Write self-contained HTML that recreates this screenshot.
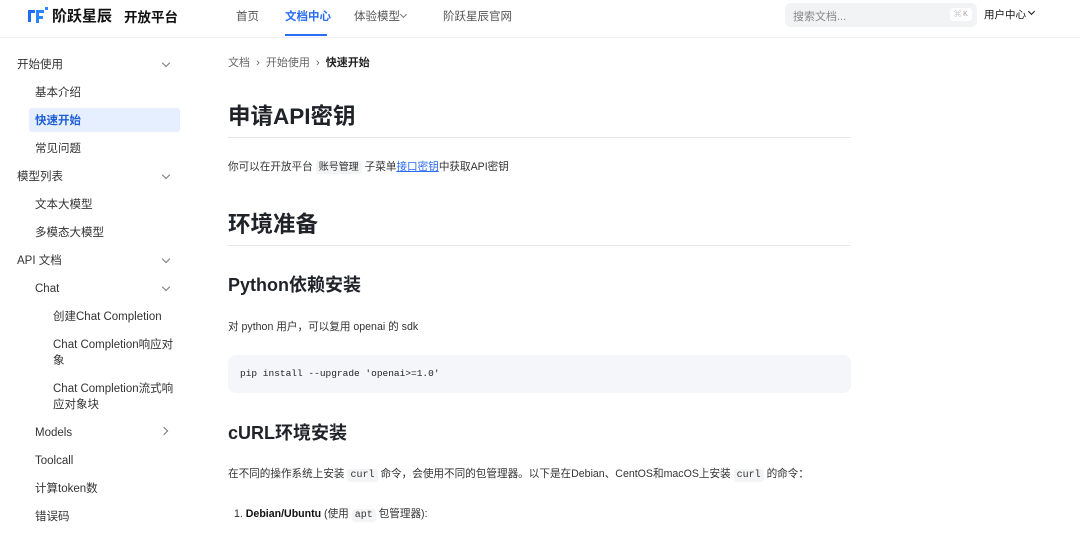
<!DOCTYPE html>
<html><head><meta charset="utf-8"><style>
*{margin:0;padding:0;box-sizing:border-box}
body{width:1080px;height:541px;overflow:hidden;background:#fff;font-family:"Liberation Sans","Noto Sans CJK SC",sans-serif;color:#1f2329;position:relative}
.a{position:absolute;white-space:nowrap}
.hdr{position:absolute;left:0;top:0;width:1080px;height:38px;border-bottom:1px solid #eef0f3}
.nav{font-size:11.5px;color:#555;top:9px;line-height:16px}
.side{font-size:11.5px;color:#333;line-height:16px}
.chev{position:absolute;width:6px;height:6px;border-right:1.2px solid #777;border-bottom:1.2px solid #777}
code{font-family:"Liberation Mono",monospace;font-size:10px;background:#f3f4f6;border-radius:3px;padding:1px 3px;color:#333}
.p{font-size:10.6px;color:#333;line-height:16px}
h1{position:absolute;left:228px;width:623px;font-size:22.5px;line-height:28px;font-weight:bold;border-bottom:1px solid #e8e8e8;padding-bottom:6px}
h2{position:absolute;left:228px;font-size:18px;line-height:24px;font-weight:bold}
</style></head><body>
<div class="hdr"></div>
<svg class="a" style="left:27px;top:6px" width="22" height="18" viewBox="0 0 22 18"><path d="M1 4h7v3H4v9H1z" fill="#1d6cf5"/><path d="M9 4h8v3h-5v3h4v3h-4v4H9z" fill="#2a86ff"/><rect x="18" y="1" width="3" height="3" fill="#2a86ff"/></svg>
<div class="a" style="left:52px;top:5px;font-size:15px;font-weight:bold;color:#111">阶跃星辰</div>
<div class="a" style="left:124px;top:6px;font-size:13.5px;font-weight:bold;color:#111">开放平台</div>
<div class="a nav" style="left:236px">首页</div>
<div class="a nav" style="left:285px;color:#2a6df4;font-weight:bold">文档中心</div>
<div class="a" style="left:285px;top:34px;width:42px;height:2px;background:#2a6df4"></div>
<div class="a nav" style="left:354px">体验模型</div>
<div class="chev" style="left:401px;top:12px;transform:rotate(45deg);width:5px;height:5px"></div>
<div class="a nav" style="left:443px">阶跃星辰官网</div>
<div class="a" style="left:785px;top:3px;width:192px;height:24px;background:#f2f3f5;border-radius:6px"></div>
<div class="a" style="left:793px;top:8px;font-size:11px;color:#888">搜索文档...</div>
<div class="a" style="left:950px;top:8px;width:22px;height:13px;background:#fff;border-radius:3px;font-size:7px;color:#999;text-align:center;line-height:13px">⌘ K</div>
<div class="a" style="left:984px;top:7px;font-size:10.5px;color:#111;line-height:16px">用户中心</div>
<div class="chev" style="left:1029px;top:9px;transform:rotate(45deg);border-color:#111;width:5px;height:5px"></div>

<div class="a" style="left:29px;top:108px;width:151px;height:24px;background:#e6efff;border-radius:3px"></div>
<div class="a side" style="left:17px;top:57px">开始使用</div><div class="chev" style="left:163px;top:60px;transform:rotate(45deg)"></div>
<div class="a side" style="left:35px;top:85px">基本介绍</div>
<div class="a side" style="left:35px;top:113px;color:#1d5fd6;font-weight:bold">快速开始</div>
<div class="a side" style="left:35px;top:141px">常见问题</div>
<div class="a side" style="left:17px;top:169px">模型列表</div><div class="chev" style="left:163px;top:172px;transform:rotate(45deg)"></div>
<div class="a side" style="left:35px;top:197px">文本大模型</div>
<div class="a side" style="left:35px;top:225px">多模态大模型</div>
<div class="a side" style="left:17px;top:253px">API 文档</div><div class="chev" style="left:163px;top:256px;transform:rotate(45deg)"></div>
<div class="a side" style="left:35px;top:281px">Chat</div><div class="chev" style="left:163px;top:284px;transform:rotate(45deg)"></div>
<div class="a side" style="left:53px;top:309px">创建Chat Completion</div>
<div class="a side" style="left:53px;top:337px">Chat Completion响应对<br>象</div>
<div class="a side" style="left:53px;top:381px">Chat Completion流式响<br>应对象块</div>
<div class="a side" style="left:35px;top:425px">Models</div><div class="chev" style="left:161px;top:428px;transform:rotate(-45deg)"></div>
<div class="a side" style="left:35px;top:453px">Toolcall</div>
<div class="a side" style="left:35px;top:481px">计算token数</div>
<div class="a side" style="left:35px;top:509px">错误码</div>

<div class="a" style="left:228px;top:55px;font-size:11px;color:#666;line-height:16px">文档 &nbsp;›&nbsp; 开始使用 &nbsp;›&nbsp; <b style="color:#222">快速开始</b></div>
<h1 style="top:103px">申请API密钥</h1>
<div class="a p" style="left:228px;top:159px">你可以在开放平台 <code style="font-family:inherit">账号管理</code> 子菜单<span style="color:#2a6df4;text-decoration:underline">接口密钥</span>中获取API密钥</div>
<h1 style="top:211px">环境准备</h1>
<h2 style="top:273px">Python依赖安装</h2>
<div class="a p" style="left:228px;top:319px">对 python 用户，可以复用 openai 的 sdk</div>
<div class="a" style="left:228px;top:355px;width:623px;height:38px;background:#f5f6fa;border-radius:8px"></div>
<div class="a" style="left:240px;top:368px;font-family:'Liberation Mono',monospace;font-size:9.5px;color:#222">pip install --upgrade 'openai&gt;=1.0'</div>
<h2 style="top:421px">cURL环境安装</h2>
<div class="a p" style="left:228px;top:466px">在不同的操作系统上安装 <code>curl</code> 命令，会使用不同的包管理器。以下是在Debian、CentOS和macOS上安装 <code>curl</code> 的命令：</div>
<div class="a p" style="left:234px;top:506px">1. <b style="color:#111">Debian/Ubuntu</b> (使用 <code>apt</code> 包管理器):</div>
</body></html>
